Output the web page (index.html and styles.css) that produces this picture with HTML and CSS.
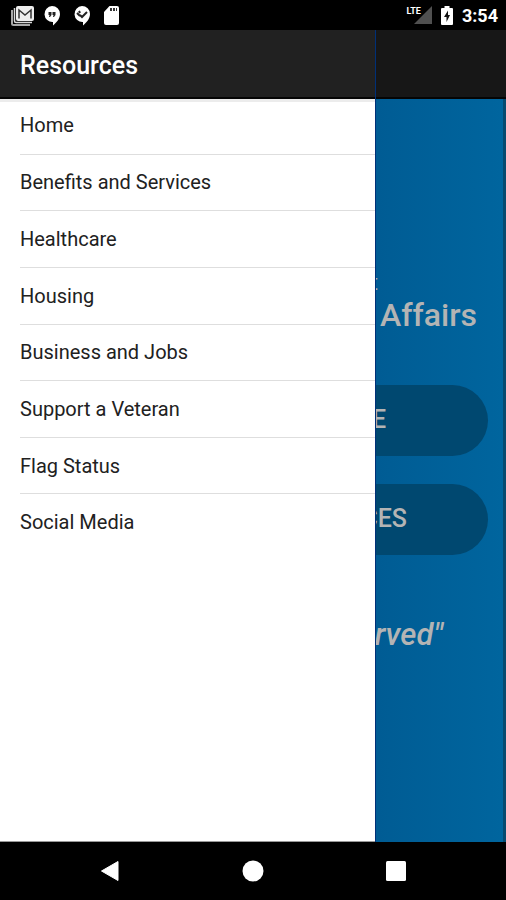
FILE: index.html
```html
<!DOCTYPE html>
<html lang="en">
<head>
<meta charset="utf-8">
<meta name="viewport" content="width=device-width, initial-scale=1">
<title>Resources</title>
<link rel="stylesheet" href="styles.css">
</head>
<body>
<div class="status">
  <div class="notices">
    <svg width="24" height="20" viewBox="0 0 24 20" aria-hidden="true">
      <path d="M1 4v13.500q0 1.500 1.500 1.500H19" fill="none" stroke="#a8a8a8" stroke-width="2"/>
      <path d="M3.500 2v13q0 1.500 1.500 1.500H21" fill="none" stroke="#d8d8d8" stroke-width="1.500"/>
      <rect x="5" y="0" width="18" height="15" rx="2" fill="#eee"/>
      <path d="M8 12.500V4l6 5 6-5v8.500" fill="none" stroke="#333" stroke-width="1.500"/>
    </svg>
    <svg width="16" height="20" viewBox="0 0 16 20" aria-hidden="true">
      <path d="M8 0a8 8 0 0 1 8 8c0 5-4 9-7 11.500V16A8 8 0 1 1 8 0z" fill="#fff"/>
      <path d="M4.500 6h3v3L6 11H5l.5-2h-1zM8.500 6h3v3L10 11H9l.5-2h-1z" fill="#222"/>
    </svg>
    <svg width="16" height="20" viewBox="0 0 16 20" aria-hidden="true">
      <path d="M8 0a8 8 0 0 1 8 8c0 5-4 9-7 11.500V16A8 8 0 1 1 8 0z" fill="#fff"/>
      <path d="M3 7l3 3M5 5l1 2M6 9l2 2 5-5" fill="none" stroke="#222" stroke-width="2"/>
    </svg>
    <svg width="15" height="19" viewBox="0 0 15 19" aria-hidden="true">
      <path d="M5.500 0H13q2 0 2 2v15q0 2-2 2H2q-2 0-2-2V6z" fill="#fff"/>
      <path d="M6 2h2v3H6zM9 2h2v3H9zM12 2h1v3h-1z" fill="#333"/>
    </svg>
  </div>
  <div class="system">
    <div class="signal">
      <span class="lte">LTE</span>
      <svg width="18" height="18" viewBox="0 0 18 18" aria-hidden="true"><path d="M18 0v18H0z" fill="#505050"/></svg>
    </div>
    <svg width="12" height="19" viewBox="0 0 12 19" aria-hidden="true">
      <path d="M3.500 0h5v2H11q1 0 1 1v15q0 1-1 1H1q-1 0-1-1V3q0-1 1-1h2.500z" fill="#fff"/>
      <path d="M7 4.500L3 11h2.500v5L9 9H7z" fill="#111"/>
    </svg>
    <span class="clock">3:54</span>
  </div>
</div>

<div class="stage">
  <div class="home">
    <div class="appbar"></div>
    <main class="hero">
      <p class="overline">t</p>
      <h1 class="agency">Affairs</h1>
      <button class="pill first" type="button">E</button>
      <button class="pill second" type="button">CES</button>
      <p class="motto">rved"</p>
    </main>
  </div>
  <nav class="drawer" aria-labelledby="drawer-title">
    <h2 class="title" id="drawer-title">Resources</h2>
    <ul class="menu">
      <li><a href="#home">Home</a></li>
      <li><a href="#benefits">Benefits and Services</a></li>
      <li><a href="#healthcare">Healthcare</a></li>
      <li><a href="#housing">Housing</a></li>
      <li><a href="#business">Business and Jobs</a></li>
      <li><a href="#support">Support a Veteran</a></li>
      <li><a href="#flag">Flag Status</a></li>
      <li><a href="#social">Social Media</a></li>
    </ul>
  </nav>
</div>

<div class="navbar">
  <button type="button" aria-label="Back"><svg width="20" height="22" viewBox="0 0 20 22"><path d="M18 1.500v19L1.500 11z" fill="#fff" stroke="#fff" stroke-linejoin="round"/></svg></button>
  <button type="button" aria-label="Home"><svg width="22" height="22" viewBox="0 0 22 22"><circle cx="11" cy="11" r="10.500" fill="#fff"/></svg></button>
  <button type="button" aria-label="Recent apps"><svg width="20" height="20" viewBox="0 0 20 20"><rect width="20" height="20" rx="1.500" fill="#fff"/></svg></button>
</div>
</body>
</html>
```
FILE: styles.css
```css
* {
  box-sizing: border-box;
  margin: 0;
  padding: 0;
}

body {
  display: flex;
  flex-direction: column;
  min-height: 100vh;
  background: #000;
  font-family: Roboto, "Liberation Sans", sans-serif;
}

button {
  border: 0;
  background: none;
  font: inherit;
  cursor: pointer;
}

svg {
  display: block;
}

.status {
  display: flex;
  justify-content: space-between;
  height: 30px;
  padding: 6px 8px 0 11px;
  color: #fff;
}

.notices {
  display: flex;
  align-items: flex-start;
}

.notices svg {
  margin-right: 14px;
}

.notices svg:first-child {
  margin-right: 9px;
}

.system {
  display: flex;
  align-items: flex-start;
  gap: 9px;
}

.signal {
  display: flex;
}

.lte {
  margin-right: -7px;
  font-size: 9px;
  line-height: 10px;
  font-weight: 700;
  z-index: 1;
}

.clock {
  font-size: 18px;
  line-height: 20px;
  font-weight: 700;
}

.stage {
  position: relative;
  display: flex;
  flex: 1;
}

.home {
  display: flex;
  flex: 1;
  flex-direction: column;
}

.appbar {
  height: 69px;
  border-bottom: 2px solid #050505;
  background: #171717;
}

.hero {
  display: flex;
  flex: 1;
  flex-direction: column;
  padding: 172px 15px 0 18px;
  border-right: 3px solid #064a70;
  background: linear-gradient(to right, #005088, #005c94 75%, #00659e);
  color: #b4b4b4;
  text-align: right;
}

.overline {
  padding-right: 110px;
  font-size: 22px;
  line-height: 24px;
}

.agency {
  padding-right: 11px;
  font-size: 32px;
  line-height: 40px;
  font-weight: 500;
}

.pill {
  height: 71px;
  padding-bottom: 2px;
  border-radius: 36px;
  background: #004870;
  color: #b4b4b4;
  font-size: 25px;
  font-weight: 500;
  text-align: right;
}

.first {
  margin-top: 50px;
  padding-right: 102px;
}

.second {
  margin-top: 28px;
  padding-right: 81px;
}

.motto {
  margin-top: 60px;
  padding-right: 45px;
  font-size: 31px;
  line-height: 40px;
  font-style: italic;
  font-weight: 500;
}

.drawer {
  position: absolute;
  inset: 0 auto 0 0;
  width: 74.2%;
  border-bottom: 1px solid #999;
  background: #fff;
  box-shadow: 1px 0 #003078;
}

.title {
  position: relative;
  height: 67px;
  padding-left: 20px;
  background: #212121;
  box-shadow: 0 2px #050505;
  color: #fff;
  font-size: 25px;
  line-height: 71px;
  font-weight: 500;
}

.menu {
  display: grid;
  grid-auto-rows: 1fr;
  height: 453px;
  padding-left: 20px;
  box-shadow: inset 0 5px #ececec;
  list-style: none;
}

.menu li {
  display: grid;
  align-items: center;
}

.menu li + li {
  border-top: 1px solid #dedede;
}

.menu a {
  color: #212121;
  font-size: 20px;
  line-height: 24px;
  text-decoration: none;
}

.navbar {
  display: flex;
  justify-content: space-around;
  align-items: center;
  height: 58px;
  padding: 0 39px;
}

.navbar button {
  display: grid;
  place-items: center;
  width: 48px;
  height: 48px;
}
```
